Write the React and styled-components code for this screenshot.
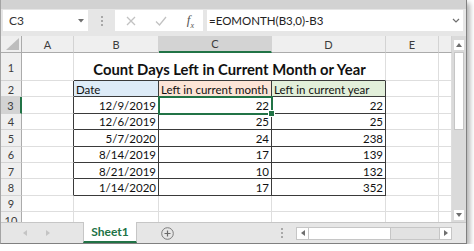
import styled, { createGlobalStyle } from "styled-components";

const GREEN = "#217346";
const GRID = "#dedede";
const DARK = "#3a3a3a";

const GlobalStyle = createGlobalStyle`
  html, body { margin: 0; padding: 0; background: #ffffff; }
  body { font-family: Lato, "Liberation Sans", sans-serif; color: #1c1c1c; }
`;

const rows = [
  ["12/9/2019", 22, 22],
  ["12/6/2019", 25, 25],
  ["5/7/2020", 24, 238],
  ["8/14/2019", 17, 139],
  ["8/21/2019", 10, 132],
  ["1/14/2020", 17, 352],
];

function App() {
  return (
    <>
      <GlobalStyle />
      <Window>
        <TopStrip />
        <FormulaBar>
          <NameBox>
            <span>C3</span>
            <svg width="6" height="4" viewBox="0 0 6 4">
              <path d="M0 0 L6 0 L3 3.5 Z" fill="#6f6f6f" />
            </svg>
          </NameBox>
          <Dots>
            <i /><i /><i />
          </Dots>
          <IconBox>
            <svg width="10" height="10" viewBox="0 0 10 10">
              <path d="M1 1 L9 9 M9 1 L1 9" stroke="#c2c2c2" strokeWidth="1.3" fill="none" />
            </svg>
            <svg width="12" height="10" viewBox="0 0 12 10">
              <path d="M1 5.5 L4.5 9 L11 1" stroke="#c2c2c2" strokeWidth="1.3" fill="none" />
            </svg>
            <Fx>f<sub>x</sub></Fx>
          </IconBox>
          <FormulaBox>
            <span>=EOMONTH(B3,0)-B3</span>
            <svg width="8" height="5" viewBox="0 0 8 5">
              <path d="M1 1 L4 4 L7 1" stroke="#6f6f6f" strokeWidth="1.2" fill="none" />
            </svg>
          </FormulaBox>
        </FormulaBar>

        <SheetArea>
          <Grid>
            <Corner />
            {["A", "B", "C", "D", "E", ""].map((c) => (
              <ColHead key={c || "F"} $active={c === "C"}>{c}</ColHead>
            ))}

            <RowHead>1</RowHead>
            <Cell />
            <Title>Count Days Left in Current Month or Year</Title>
            <Cell />
            <Cell />

            <RowHead>2</RowHead>
            <Cell $dr />
            <Cell $dr $db $fill="#ddebf7">Date</Cell>
            <Cell $dr $db $fill="#fce4d6">Left in current month</Cell>
            <Cell $dr $db $fill="#e2efda">Left in current year</Cell>
            <Cell />
            <Cell />

            {rows.map(([date, m, y], i) => (
              <Row key={date} n={i + 3} date={date} m={m} y={y} />
            ))}

            {[9, 10].map((n) => (
              <EmptyRow key={n} n={n} />
            ))}
          </Grid>

          <VScroll>
            <ArrowBox>
              <svg width="6" height="4" viewBox="0 0 6 4">
                <path d="M0 4 L6 4 L3 0 Z" fill="#6f6f6f" />
              </svg>
            </ArrowBox>
            <VThumb />
            <Spacer />
            <ArrowBox>
              <svg width="6" height="4" viewBox="0 0 6 4">
                <path d="M0 0 L6 0 L3 4 Z" fill="#6f6f6f" />
              </svg>
            </ArrowBox>
          </VScroll>
        </SheetArea>

        <TabBar>
          <Nav>
            <svg width="4" height="6" viewBox="0 0 4 6">
              <path d="M4 0 L4 6 L0 3 Z" fill="#c4c4c4" />
            </svg>
            <svg width="4" height="6" viewBox="0 0 4 6">
              <path d="M0 0 L0 6 L4 3 Z" fill="#c4c4c4" />
            </svg>
          </Nav>
          <SheetTab>Sheet1</SheetTab>
          <AddSheet>
            <svg width="13" height="13" viewBox="0 0 13 13">
              <circle cx="6.5" cy="6.5" r="5.8" stroke="#7a7a7a" strokeWidth="1" fill="none" />
              <path d="M6.5 3.5 V9.5 M3.5 6.5 H9.5" stroke="#6a6a6a" strokeWidth="1.2" />
            </svg>
          </AddSheet>
          <Spacer />
          <Splitter>
            <i /><i /><i />
          </Splitter>
          <HScroll>
            <HArrow>
              <svg width="4" height="6" viewBox="0 0 4 6">
                <path d="M4 0 L4 6 L0 3 Z" fill="#6f6f6f" />
              </svg>
            </HArrow>
            <HThumb />
            <Spacer />
            <HArrow $boxed>
              <svg width="4" height="6" viewBox="0 0 4 6">
                <path d="M0 0 L0 6 L4 3 Z" fill="#6f6f6f" />
              </svg>
            </HArrow>
          </HScroll>
          <ScrollCorner />
        </TabBar>
      </Window>
    </>
  );
}

function Row({ n, date, m, y }) {
  return (
    <>
      <RowHead $active={n === 3}>{n}</RowHead>
      <Cell $dr />
      <Cell $dr $db $align="right">{date}</Cell>
      <Cell $dr $db $align="right" $selected={n === 3}>{m}</Cell>
      <Cell $dr $db $align="right">{y}</Cell>
      <Cell />
      <Cell />
    </>
  );
}

function EmptyRow({ n }) {
  return (
    <>
      <RowHead>{n}</RowHead>
      <Cell />
      <Cell />
      <Cell />
      <Cell />
      <Cell />
      <Cell />
    </>
  );
}

export default App;

const Window = styled.div`
  width: 465px;
  height: 243px;
  border-left: 1px solid #a4a4a4;
  border-right: 1px solid #808080;
  border-bottom: 1px solid #808080;
  background: #e6e6e6;
  box-shadow: 3px 3px 5px rgba(0, 0, 0, 0.3);
  display: flex;
  flex-direction: column;
  overflow: hidden;
`;

const TopStrip = styled.div`
  flex: none;
  height: 9px;
  background: #d2d2d2;
`;

const FormulaBar = styled.div`
  flex: none;
  height: 27px;
  box-sizing: border-box;
  padding: 1px 3px 0 2px;
  display: flex;
  align-items: flex-start;
`;

const NameBox = styled.div`
  width: 85px;
  height: 21px;
  box-sizing: border-box;
  padding: 0 4px 0 6px;
  background: #fff;
  display: flex;
  align-items: center;
  justify-content: space-between;
  font-size: 12px;
  color: #333;
`;

const Dots = styled.div`
  width: 27px;
  height: 21px;
  display: flex;
  flex-direction: column;
  align-items: center;
  justify-content: center;
  gap: 2px;

  i {
    width: 2px;
    height: 2px;
    background: #a8a8a8;
  }
`;

const IconBox = styled.div`
  width: 88px;
  height: 21px;
  box-sizing: border-box;
  padding: 0 9px 0 11px;
  background: #fff;
  display: flex;
  align-items: center;
  justify-content: space-between;
  margin-right: 4px;
`;

const Fx = styled.span`
  font-family: "Liberation Serif", serif;
  font-style: italic;
  font-size: 13px;
  color: #555;

  sub {
    font-size: 8px;
  }
`;

const FormulaBox = styled.div`
  flex: 1;
  height: 21px;
  box-sizing: border-box;
  padding: 0 3px 0 2px;
  background: #fff;
  display: flex;
  align-items: center;
  justify-content: space-between;
  font-size: 11.5px;
  color: #222;
`;

const SheetArea = styled.div`
  flex: none;
  height: 186px;
  display: flex;
`;

const Grid = styled.div`
  width: 451px;
  height: 186px;
  overflow: hidden;
  background: #fff;
  display: grid;
  grid-template-columns: 21px 52px 85px 113px 114px 53px 13px;
  grid-template-rows: 17px 28px repeat(9, 16.4px);
`;

const Corner = styled.div`
  background: #efefef;
  border-right: 1px solid #ababab;
  border-bottom: 1px solid #ababab;
  display: flex;
  align-items: flex-end;
  justify-content: flex-end;
  padding: 0 2px 2px 0;

  &::after {
    content: "";
    border-left: 13px solid transparent;
    border-bottom: 12px solid #bdbdbd;
  }
`;

const ColHead = styled.div`
  background: ${(p) => (p.$active ? "#d3d3d3" : "#efefef")};
  border-right: 1px solid #d3d3d3;
  border-bottom: ${(p) => (p.$active ? `2px solid ${GREEN}` : "1px solid #ababab")};
  display: flex;
  align-items: center;
  justify-content: center;
  font-size: 11px;
  color: #3c3c3c;
`;

const RowHead = styled.div`
  background: ${(p) => (p.$active ? "#d3d3d3" : "#efefef")};
  border-right: ${(p) => (p.$active ? `2px solid ${GREEN}` : "1px solid #ababab")};
  border-bottom: 1px solid #d3d3d3;
  display: flex;
  align-items: center;
  justify-content: center;
  font-size: 11px;
  color: #3c3c3c;
  padding-top: 1px;
`;

const Cell = styled.div`
  position: relative;
  background: ${(p) => p.$fill || "#fff"};
  border-right: 1px solid ${(p) => (p.$dr ? DARK : GRID)};
  border-bottom: 1px solid ${(p) => (p.$db ? DARK : GRID)};
  display: flex;
  align-items: center;
  justify-content: ${(p) => (p.$align === "right" ? "flex-end" : "flex-start")};
  padding: 1px 2px 0;
  font-size: 11.5px;
  color: #111;
  white-space: nowrap;
  outline: ${(p) => (p.$selected ? `2px solid ${GREEN}` : "none")};
  outline-offset: -1px;
  z-index: ${(p) => (p.$selected ? 2 : "auto")};

  &::after {
    content: "";
    display: ${(p) => (p.$selected ? "block" : "none")};
    position: absolute;
    right: -4px;
    bottom: -4px;
    width: 5px;
    height: 5px;
    background: ${GREEN};
    border: 1px solid #fff;
  }
`;

const Title = styled.div`
  grid-column: 3 / 6;
  background: #fff;
  border-right: 1px solid ${GRID};
  border-bottom: 1px solid ${DARK};
  display: flex;
  align-items: flex-end;
  justify-content: center;
  padding-bottom: 2px;
  font-size: 14.8px;
  font-weight: 700;
  color: #111;
  white-space: nowrap;
`;

const VScroll = styled.div`
  width: 14px;
  box-sizing: border-box;
  padding: 4px 2px 2px;
  background: #dadada;
  display: flex;
  flex-direction: column;
`;

const ArrowBox = styled.div`
  height: 10px;
  background: #fff;
  display: flex;
  align-items: center;
  justify-content: center;
`;

const VThumb = styled.div`
  margin-top: 2px;
  height: 78px;
  background: #fff;
  border: 1px solid #c6c6c6;
  box-sizing: border-box;
`;

const Spacer = styled.div`
  flex: 1;
`;

const TabBar = styled.div`
  flex: none;
  height: 21px;
  box-sizing: border-box;
  border-top: 1px solid #c6c6c6;
  background: #e6e6e6;
  display: flex;
  align-items: stretch;
`;

const Nav = styled.div`
  width: 82px;
  display: flex;
  align-items: center;
  gap: 19px;
  padding-left: 22px;
  box-sizing: border-box;
`;

const SheetTab = styled.div`
  width: 54px;
  box-sizing: border-box;
  margin-top: -1px;
  background: #fff;
  border-left: 1px solid #c6c6c6;
  border-right: 1px solid #c6c6c6;
  border-bottom: 2px solid ${GREEN};
  display: flex;
  align-items: center;
  justify-content: center;
  font-size: 12px;
  font-weight: 700;
  color: ${GREEN};
`;

const AddSheet = styled.div`
  margin-left: 24px;
  display: flex;
  align-items: center;
`;

const Splitter = styled.div`
  width: 4px;
  margin-right: 12px;
  display: flex;
  flex-direction: column;
  align-items: center;
  justify-content: center;
  gap: 2px;

  i {
    width: 2px;
    height: 2px;
    background: #a8a8a8;
  }
`;

const HScroll = styled.div`
  width: 156px;
  height: 13px;
  align-self: center;
  box-sizing: border-box;
  border: 1px solid #c6c6c6;
  background: #e2e2e2;
  display: flex;
`;

const HArrow = styled.div`
  width: 11px;
  background: #fff;
  border-left: ${(p) => (p.$boxed ? "1px solid #c6c6c6" : "none")};
  display: flex;
  align-items: center;
  justify-content: center;
`;

const HThumb = styled.div`
  width: 81px;
  background: #fff;
  border-left: 1px solid #c6c6c6;
  border-right: 1px solid #c6c6c6;
`;

const ScrollCorner = styled.div`
  width: 14px;
`;
